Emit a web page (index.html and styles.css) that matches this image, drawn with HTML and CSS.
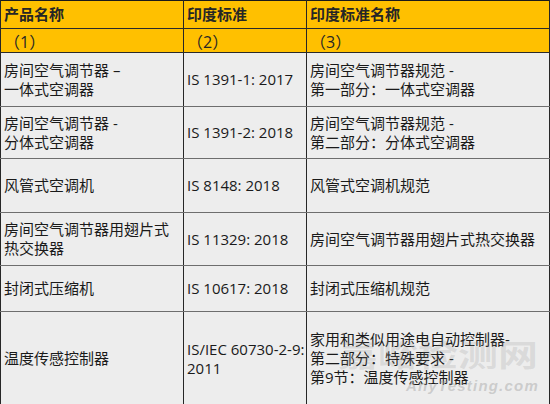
FILE: index.html
```html
<!DOCTYPE html>
<html lang="zh">
<head>
<meta charset="utf-8">
<link rel="stylesheet" href="styles.css">
</head>
<body>
<div class="wrap">
<table class="std">
<colgroup><col class="c1"><col class="c2"><col class="c3"></colgroup>
<thead>
<tr class="h1"><th>产品名称</th><th>印度标准</th><th>印度标准名称</th></tr>
<tr class="h2"><th>（1）</th><th>（2）</th><th>（3）</th></tr>
</thead>
<tbody>
<tr class="r1"><td>房间空气调节器 –<br>一体式空调器</td><td>IS 1391-1: 2017</td><td>房间空气调节器规范 -<br>第一部分：一体式空调器</td></tr>
<tr class="r2"><td>房间空气调节器 -<br>分体式空调器</td><td>IS 1391-2: 2018</td><td>房间空气调节器规范 -<br>第二部分：分体式空调器</td></tr>
<tr class="r3"><td>风管式空调机</td><td>IS 8148: 2018</td><td>风管式空调机规范</td></tr>
<tr class="r4"><td>房间空气调节器用翅片式<br>热交换器</td><td>IS 11329: 2018</td><td>房间空气调节器用翅片式热交换器</td></tr>
<tr class="r5"><td>封闭式压缩机</td><td>IS 10617: 2018</td><td>封闭式压缩机规范</td></tr>
<tr class="r6"><td>温度传感控制器</td><td>IS/IEC 60730-2-9:<br>2011</td><td>家用和类似用途电自动控制器-<br>第二部分：特殊要求 -<br>第9节：温度传感控制器</td></tr>
</tbody>
</table>
<div class="wm">
<div class="wm-cn">嘉峪检测网</div>
<div class="wm-en">AnyTesting.com</div>
</div>
</div>
</body>
</html>
```
FILE: styles.css
```css
html, body {
  margin: 0;
  padding: 0;
  background: #ffffff;
}
.wrap {
  position: relative;
  width: 550px;
  height: 404px;
  overflow: hidden;
}
.std {
  border-collapse: collapse;
  table-layout: fixed;
  width: 549px;
  font-family: "Open Sans", "Noto Sans CJK SC", sans-serif;
  font-size: 15px;
  line-height: 19px;
  color: #1a1a1a;
  border: 1px solid #1a1a1a;
}
.c1 { width: 183px; }
.c2 { width: 123px; }
.c3 { width: 243px; }
.std th, .std td {
  padding: 0 3px;
  text-align: left;
  vertical-align: middle;
  border-left: 1px solid #262626;
  border-right: 1px solid #262626;
  white-space: nowrap;
}
.std th {
  background: #ffc000;
  font-weight: bold;
  color: #262626;
  border-bottom: 1px solid #2a2a2a;
}
.std td {
  background: #ededed;
  border-bottom: 1px solid #6e6e6e;
}
.h1 { height: 28px; }
.h2 { height: 21px; }
.h2 th { font-weight: normal; padding-top: 4px; font-size: 16px; }
.r1 { height: 54px; }
.r2 { height: 52px; }
.r3 { height: 54px; }
.r4 { height: 53px; }
.r5 { height: 46px; }
.r6 { height: 94px; }
.r6 td { border-bottom: 1px solid #1a1a1a; }
.wm {
  position: absolute;
  left: 338px;
  top: 338px;
  width: 206px;
  height: 58px;
  pointer-events: none;
}
.wm-cn {
  height: 32px;
  font-family: "Noto Sans CJK SC", sans-serif;
  font-weight: bold;
  font-size: 40px;
  line-height: 40px;
  color: rgba(140, 140, 140, 0.2);
  transform: scaleY(0.75);
  transform-origin: left top;
  white-space: nowrap;
}
.wm-en {
  margin-left: 68px;
  margin-top: 8px;
  font-family: "Liberation Sans", sans-serif;
  font-style: italic;
  font-weight: bold;
  font-size: 15px;
  line-height: 16px;
  letter-spacing: 1.2px;
  color: rgba(150, 150, 150, 0.4);
  white-space: nowrap;
}
```
